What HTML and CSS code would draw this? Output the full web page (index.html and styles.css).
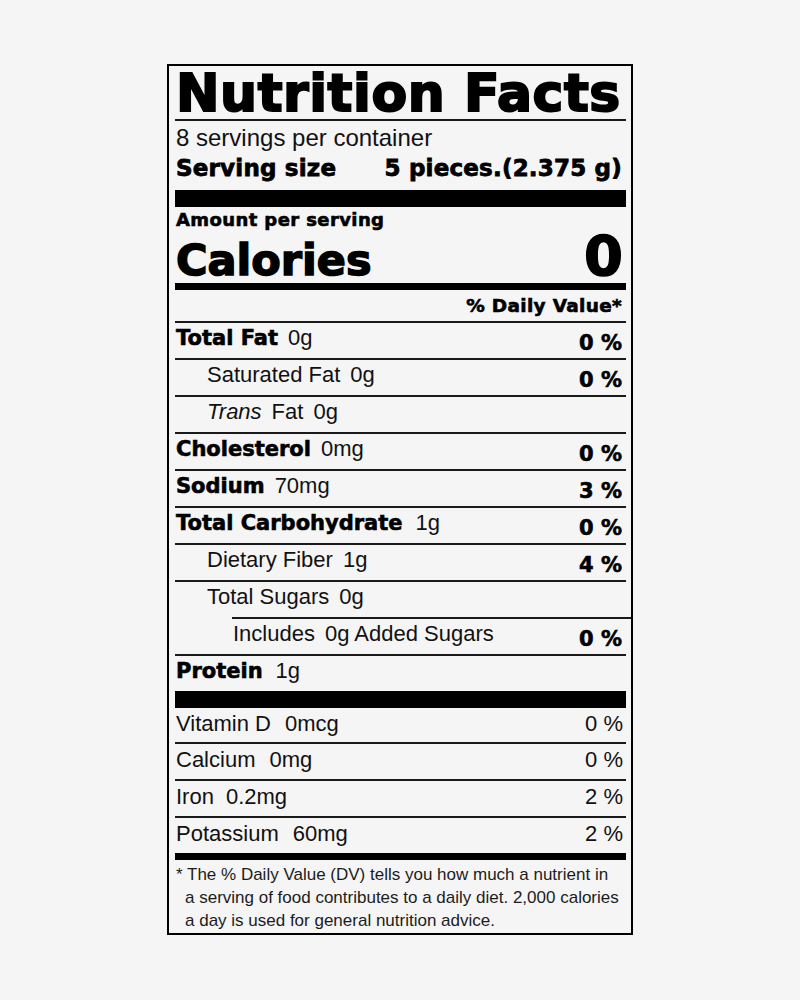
FILE: index.html
```html
<!DOCTYPE html>
<html lang="en">
<head>
<meta charset="utf-8">
<title>Nutrition Facts</title>
<link rel="stylesheet" href="styles.css">
</head>
<body>
<div class="page">
  <section class="label">
    <h1 class="title">Nutrition Facts</h1>
    <p class="servings">8 servings per container</p>
    <div class="serving-size"><span>Serving size</span><span>5 pieces.(2.375 g)</span></div>
    <div class="bar-lg"></div>
    <p class="amount">Amount per serving</p>
    <div class="calories"><span class="cal-label">Calories</span><span class="cal-value">0</span></div>
    <div class="bar-md"></div>
    <div class="dv-head">% Daily Value*</div>

    <div class="row"><span class="name"><b>Total Fat</b><span class="amt">0g</span></span><b class="pct">0 %</b></div>
    <div class="row sub"><span class="name">Saturated Fat<span class="amt">0g</span></span><b class="pct">0 %</b></div>
    <div class="row sub"><span class="name"><i>Trans</i><span class="amt">Fat</span><span class="amt">0g</span></span></div>
    <div class="row"><span class="name"><b>Cholesterol</b><span class="amt">0mg</span></span><b class="pct">0 %</b></div>
    <div class="row"><span class="name"><b>Sodium</b><span class="amt">70mg</span></span><b class="pct">3 %</b></div>
    <div class="row"><span class="name"><b>Total Carbohydrate</b><span class="amt wide">1g</span></span><b class="pct">0 %</b></div>
    <div class="row sub"><span class="name">Dietary Fiber<span class="amt">1g</span></span><b class="pct">4 %</b></div>
    <div class="row sub"><span class="name">Total Sugars<span class="amt">0g</span></span></div>
    <div class="row sub2"><span class="name">Includes<span class="amt">0g</span> Added Sugars</span><b class="pct">0 %</b></div>
    <div class="row"><span class="name"><b>Protein</b><span class="amt wide">1g</span></span></div>

    <div class="bar-lg"></div>

    <div class="vrow first"><span>Vitamin D<span class="vamt">0mcg</span></span><span>0 %</span></div>
    <div class="vrow"><span>Calcium<span class="vamt">0mg</span></span><span>0 %</span></div>
    <div class="vrow"><span>Iron<span class="vamt narrow">0.2mg</span></span><span>2 %</span></div>
    <div class="vrow"><span>Potassium<span class="vamt">60mg</span></span><span>2 %</span></div>

    <div class="bar-md"></div>

    <p class="footnote">* The % Daily Value (DV) tells you how much a nutrient in<br>a serving of food contributes to a daily diet. 2,000 calories<br>a day is used for general nutrition advice.</p>
  </section>
</div>
</body>
</html>
```

FILE: styles.css
```css
body {
  margin: 0;
  background: #f5f5f5;
}

.page {
  display: flex;
  justify-content: center;
  padding-top: 64px;
}

.label {
  width: 466px;
  box-sizing: border-box;
  border: 2px solid #000;
  padding: 0 5px 0 6px;
  background: #f5f5f5;
  color: #000;
  font-family: "Liberation Sans", Arial, sans-serif;
}

.title {
  margin: 2px 0 0;
  padding-left: 1px;
  font-family: "DejaVu Sans", sans-serif;
  font-weight: 700;
  font-size: 52px;
  line-height: 51px;
  letter-spacing: 0.55px;
  -webkit-text-stroke: 2px #000;
  border-bottom: 2px solid #1a1a1a;
}

.servings {
  margin: 0;
  padding-top: 4px;
  padding-left: 1px;
  font-size: 24px;
  line-height: 26px;
  color: #111;
}

.serving-size {
  display: flex;
  justify-content: space-between;
  margin-top: 4px;
  padding: 0 4px 0 1px;
  font-family: "DejaVu Sans", sans-serif;
  font-weight: 700;
  font-size: 23px;
  line-height: 26px;
  letter-spacing: 0.2px;
  -webkit-text-stroke: 0.8px #000;
}

.bar-lg {
  height: 17px;
  background: #000;
}

.serving-size + .bar-lg {
  margin-top: 9px;
}

.bar-md {
  height: 7px;
  background: #000;
}

.amount {
  margin: 0;
  padding: 3px 0 0 1px;
  font-family: "DejaVu Sans", sans-serif;
  font-weight: 700;
  font-size: 18px;
  line-height: 20px;
  letter-spacing: 0.4px;
  -webkit-text-stroke: 0.6px #000;
}

.calories {
  display: flex;
  justify-content: space-between;
  align-items: baseline;
  box-sizing: border-box;
  height: 53px;
  padding: 2px 3px 0 1px;
  font-family: "DejaVu Sans", sans-serif;
  font-weight: 700;
  -webkit-text-stroke: 1.5px #000;
}

.cal-label {
  font-size: 43px;
  line-height: 43px;
}

.cal-value {
  font-size: 56px;
  line-height: 48px;
}

.dv-head {
  padding-right: 4px;
  text-align: right;
  font-family: "DejaVu Sans", sans-serif;
  font-weight: 700;
  font-size: 18.5px;
  line-height: 31px;
  letter-spacing: 0.3px;
  -webkit-text-stroke: 0.6px #000;
}

.row {
  display: flex;
  justify-content: space-between;
  align-items: flex-start;
  box-sizing: border-box;
  height: 37px;
  border-top: 2px solid #1a1a1a;
  padding-right: 4px;
}

.row .name {
  padding-top: 3px;
  padding-left: 1px;
  font-size: 22px;
  line-height: 24px;
  color: #111;
  white-space: nowrap;
}

.row b,
.row .pct {
  font-family: "DejaVu Sans", sans-serif;
  font-weight: 700;
  font-size: 21px;
  color: #000;
  -webkit-text-stroke: 0.6px #000;
}

.row .pct {
  padding-top: 8px;
  line-height: 24px;
}

.row i {
  font-style: italic;
}

.amt {
  margin-left: 10px;
}

.amt.wide {
  margin-left: 13px;
}

.row.sub .name {
  padding-left: 32px;
}

.row.sub2 {
  margin-left: 57px;
  margin-right: -5px;
  padding-right: 9px;
}

.vrow {
  display: flex;
  justify-content: space-between;
  box-sizing: border-box;
  height: 37px;
  border-top: 2px solid #1a1a1a;
  padding: 4px 3px 0 1px;
  font-size: 22px;
  line-height: 24px;
  color: #111;
}

.vrow.first {
  height: 34px;
  border-top: 0;
}

.vamt {
  margin-left: 14px;
}

.vamt.narrow {
  margin-left: 12px;
}

.footnote {
  margin: 0;
  padding: 3px 0 1px 10px;
  text-indent: -9px;
  font-size: 17px;
  line-height: 23px;
  color: #1c1c1c;
}
```
